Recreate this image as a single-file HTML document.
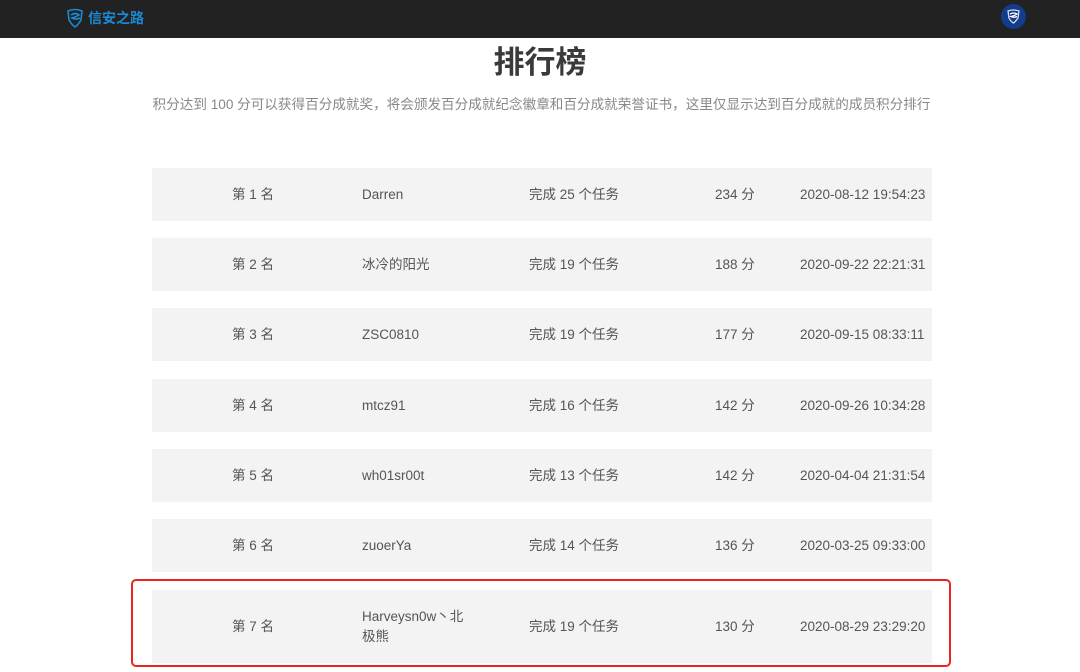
<!DOCTYPE html>
<html><head><meta charset="utf-8"><style>
body{margin:0;width:1080px;height:672px;overflow:hidden;background:#fff;font-family:"Liberation Sans","Noto Sans CJK SC",sans-serif;position:relative}
.hd{position:absolute;left:0;top:0;width:1080px;height:38px;background:#222}
.logo{position:absolute;left:66px;top:8px;color:#1a8ad4;font-size:14px;font-weight:bold;display:flex;align-items:center;gap:4px}
.av{position:absolute;left:1001px;top:4px;width:25px;height:25px;border-radius:50%;background:#123c8c}
h1{position:absolute;left:0;width:1080px;top:43px;margin:0;text-align:center;font-size:31px;color:#3a3a3a;font-weight:bold;line-height:40px}
.sub{position:absolute;left:0;width:1083px;top:95px;text-align:center;font-size:13.6px;color:#888;line-height:20px}
.row{position:absolute;left:152px;width:780px;height:53px;background:#f3f3f3;font-size:13.5px;color:#555}
.row span{position:absolute;top:50%;transform:translateY(-50%);white-space:nowrap;line-height:20px}
.c1{left:80px}.c2{left:210px}.c3{left:377px}.c4{left:563px}.c5{left:648px}
.box{position:absolute;left:131px;top:579px;width:816px;height:84px;border:2px solid #e8261c;border-radius:5px}
</style></head><body>
<div class="hd"></div>
<div class="logo"><svg width="18" height="20" viewBox="0 0 18 20"><path d="M2 3 Q9 0 16 3 L15 12 Q12 17 9 19 Q6 17 3 12 Z" fill="none" stroke="#1a8ad4" stroke-width="1.6"/><path d="M5 7 Q10 4 13 7 Q10 9 6 10 Q10 12 14 10" fill="none" stroke="#1a8ad4" stroke-width="1.6"/></svg>信安之路</div>
<div class="av"><svg width="25" height="25" viewBox="0 0 25 25"><path d="M7 7 Q12 5 18 7 L17 14 Q14 18 12.5 19 Q10 18 8 14 Z" fill="none" stroke="#dde" stroke-width="1.3"/><path d="M9 10 Q13 8 16 10 Q13 12 10 12.5 Q13 14 16 12.5" fill="none" stroke="#fff" stroke-width="1.3"/></svg></div>
<h1>排行榜</h1>
<div class="sub">积分达到 100 分可以获得百分成就奖，将会颁发百分成就纪念徽章和百分成就荣誉证书，这里仅显示达到百分成就的成员积分排行</div>
<div class="row" style="top:168px"><span class="c1">第 1 名</span><span class="c2">Darren</span><span class="c3">完成 25 个任务</span><span class="c4">234 分</span><span class="c5">2020-08-12 19:54:23</span></div>
<div class="row" style="top:238px"><span class="c1">第 2 名</span><span class="c2">冰冷的阳光</span><span class="c3">完成 19 个任务</span><span class="c4">188 分</span><span class="c5">2020-09-22 22:21:31</span></div>
<div class="row" style="top:308px"><span class="c1">第 3 名</span><span class="c2">ZSC0810</span><span class="c3">完成 19 个任务</span><span class="c4">177 分</span><span class="c5">2020-09-15 08:33:11</span></div>
<div class="row" style="top:379px"><span class="c1">第 4 名</span><span class="c2">mtcz91</span><span class="c3">完成 16 个任务</span><span class="c4">142 分</span><span class="c5">2020-09-26 10:34:28</span></div>
<div class="row" style="top:449px"><span class="c1">第 5 名</span><span class="c2">wh01sr00t</span><span class="c3">完成 13 个任务</span><span class="c4">142 分</span><span class="c5">2020-04-04 21:31:54</span></div>
<div class="row" style="top:519px"><span class="c1">第 6 名</span><span class="c2">zuoerYa</span><span class="c3">完成 14 个任务</span><span class="c4">136 分</span><span class="c5">2020-03-25 09:33:00</span></div>
<div class="row" style="top:590px;height:73px"><span class="c1">第 7 名</span><span class="c2" style="white-space:normal;width:110px">Harveysn0w丶北<br>极熊</span><span class="c3">完成 19 个任务</span><span class="c4">130 分</span><span class="c5">2020-08-29 23:29:20</span></div>
<div class="box"></div>
</body></html>
